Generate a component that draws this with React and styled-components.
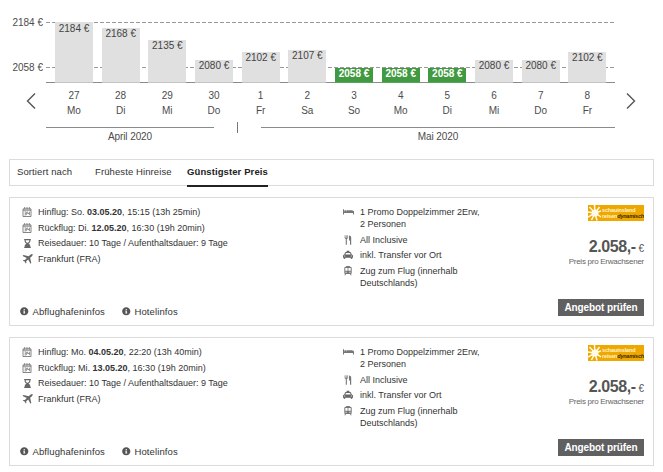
import React from "react";
import styled, { createGlobalStyle, css } from "styled-components";
import { FaHourglassEnd, FaInfoCircle } from "react-icons/fa";

const GlobalStyle = createGlobalStyle`
  * { box-sizing: border-box; }
  body { margin: 0; background: #fff; }
`;

const Page = styled.main`
  width: 663px;
  height: 472px;
  overflow: hidden;
  padding: 22px 9px 0;
  font-family: "Liberation Sans", Arial, sans-serif;
  font-size: 9px;
  color: #333;
`;

/* ---------- price chart ---------- */

const Chart = styled.section`
  display: grid;
  grid-template-columns: 37px 569px 39px;
  height: 137px;
  color: #4c4c4c;
  font-size: 10px;
`;

const Side = styled.div`
  display: flex;
  flex-direction: column;
`;

const AxisLabel = styled.span`
  height: 12px;
  margin: ${(p) => p.$margin};
  line-height: 12px;
  white-space: nowrap;
  text-align: right;
`;

const ArrowButton = styled.button`
  display: block;
  width: 10px;
  height: 18px;
  margin: ${(p) => p.$margin};
  padding: 0;
  border: 0;
  background: none;

  svg { display: block; }
`;

const Plot = styled.div`
  position: relative;
  display: flex;
  align-items: flex-end;
  height: 61px;
  padding-left: 9px;
  background: linear-gradient(#8c8c8c, #8c8c8c) bottom / 100% 1px no-repeat;
`;

const Guide = styled.div`
  position: absolute;
  left: 0;
  right: 0;
  top: ${(p) => p.$top}px;
  height: 1px;
  background: repeating-linear-gradient(90deg, #999 0 4px, transparent 4px 6px);
`;

const BarCell = styled.div`
  position: relative;
  width: 46.75px;
`;

const Bar = styled.div`
  width: 38px;
  height: ${(p) => p.$height}px;
  padding-top: ${(p) => (p.$height > 60 ? 1 : 0)}px;
  border-bottom: 1px solid ${(p) => (p.$best ? "#57a557" : "#c4c4c4")};
  background: ${(p) => (p.$best ? "#419a41" : "#e0e0e0")};
  color: ${(p) => (p.$best ? "#fff" : "#444")};
  font-weight: ${(p) => (p.$best ? 700 : 400)};
  line-height: 12px;
  text-align: center;
  white-space: nowrap;
`;

const Days = styled.div`
  display: flex;
  height: 39px;
  padding: 5px 0 0 9px;
`;

const Day = styled.div`
  width: 46.75px;
  padding-right: 8.75px;
  line-height: 15px;
  text-align: center;
`;

const Months = styled.div`
  display: flex;
`;

const Month = styled.div`
  width: ${(p) => p.$width}px;
  height: 20px;
  margin-top: 5px;
  padding-top: 3px;
  border-top: 1px solid #8a8a8a;
  line-height: 12px;
  text-align: center;
  letter-spacing: -0.1px;
`;

const MonthDivider = styled.div`
  width: 1px;
  height: 11px;
  margin: 0 23px;
  background: #777;
`;

/* ---------- sorting ---------- */

const SortBar = styled.nav`
  display: flex;
  height: 27px;
  padding-left: 7px;
  border: 1px solid #dcdcdc;
  font-size: 9.5px;
`;

const SortItem = styled.span`
  height: 27px;
  width: ${(p) => p.$width}px;
  margin-right: ${(p) => p.$gap}px;
  line-height: 24px;
  white-space: nowrap;
  letter-spacing: 0.1px;
  ${(p) =>
    p.$active &&
    css`
      border-bottom: 2px solid #222;
      font-weight: 700;
      color: #222;
    `}
`;

/* ---------- offers ---------- */

const Card = styled.article`
  display: grid;
  grid-template-columns: 324px 1fr 90px;
  height: 129px;
  margin-top: 11px;
  border: 1px solid #dcdcdc;
  padding: 0 9px 0 9px;
`;

const Column = styled.div`
  display: flex;
  flex-direction: column;
`;

const Flights = styled.ul`
  margin: 0;
  padding: 6.5px 0 0 3px;
  height: 108px;
  list-style: none;
`;

const Services = styled.ul`
  margin: 0;
  padding: 8px 0 0;
  list-style: none;
`;

const FactRow = styled.li`
  display: flex;
  height: 15.6px;
  align-items: center;
  white-space: nowrap;
`;

const ServiceRow = styled.li`
  display: flex;
  min-height: 15.5px;
  margin-bottom: ${(p) => (p.$double ? 3.5 : 0)}px;
  line-height: 12px;
  white-space: pre;
`;

const IconSlot = styled.span`
  display: flex;
  flex: none;
  align-items: center;
  justify-content: center;
  width: 10px;
  height: 12px;
  margin-right: ${(p) => p.$gap}px;
  color: #666;

  svg { display: block; flex: none; }
`;

const InfoLinks = styled.div`
  display: flex;
  align-items: center;
  font-size: 9.5px;
  letter-spacing: 0.1px;
`;

const InfoLink = styled.a`
  display: flex;
  align-items: center;
  width: ${(p) => p.$width}px;
  padding-left: 1px;
  gap: 4px;
  white-space: nowrap;

  svg { color: #555; }
`;

const PriceColumn = styled(Column)`
  align-items: flex-end;
  padding-top: 7px;
`;

const Logo = styled.div`
  display: flex;
  width: 56px;
  height: 16px;
  background: #efa800;
  overflow: hidden;
`;

const LogoText = styled.div`
  padding: 2px 0 0 1px;
  color: #fff4cf;
  font-size: 5.5px;
  font-weight: 700;
  line-height: 6px;
  white-space: nowrap;
  letter-spacing: -0.15px;

  b { color: #3a2900; font-style: italic; letter-spacing: -0.25px; }
`;

const Price = styled.div`
  margin-top: 16px;
  height: 20px;
  line-height: 20px;
  font-size: 10px;
  color: #555;

  strong { font-size: 16px; letter-spacing: -0.4px; }
`;

const PriceNote = styled.div`
  height: 10px;
  line-height: 10px;
  font-size: 8px;
  color: #666;
  white-space: nowrap;
  letter-spacing: -0.27px;
`;

const CheckButton = styled.button`
  width: 86px;
  height: 17px;
  margin-top: 32px;
  padding: 0;
  border: 0;
  background: #606060;
  color: #fff;
  font: 700 10px/17px "Liberation Sans", Arial, sans-serif;
  letter-spacing: -0.1px;
  white-space: nowrap;
`;

/* ---------- icons ---------- */

const Chevron = ({ flip }) => (
  <svg width="10" height="18" viewBox="0 0 10 18" fill="none" stroke="#555" strokeWidth="1.4">
    <path d={flip ? "M1 1.5 8.5 9 1 16.5" : "M9 1.5 1.5 9 9 16.5"} />
  </svg>
);

const CalendarIcon = () => (
  <svg width="10" height="10" viewBox="0 0 10 10" fill="none" stroke="#777">
    <path d="M1 1.9h8v7.6H1zM1 3.2h8" strokeWidth=".9" />
    <path d="M2.7 0v2.4M5 0v2.4M7.3 0v2.4" strokeWidth=".9" />
    <path d="M2.5 4.9h1.8v3H2.5M2.8 6.4h1.5M5.6 4.6v1.9h1.8M7.4 4.6v3.6" strokeWidth=".8" />
  </svg>
);

const BedIcon = () => (
  <svg width="11" height="6" viewBox="0 0 11 6" fill="#777">
    <path d="M0 .3h1v2.3h10V5.4h-1V4.1H1v1.3H0zM1.4 1.2h2v1.4h-2zM3.8 1.2h5q2 .2 2.2 1.4H3.8z" />
  </svg>
);

const CutleryIcon = () => (
  <svg width="8" height="10" viewBox="0 0 8 10" fill="none" stroke="#777">
    <path d="M1 .3v3M2.3.3v3M3.6.3v3" strokeWidth=".7" />
    <path d="M1 3.2h2.6M2.3 3v6.7" strokeWidth="1.1" />
    <path d="M5 .5q2.2 0 2.2 1.8v7.4H6V5.5H5z" fill="#777" stroke="none" />
  </svg>
);

const TaxiIcon = () => (
  <svg width="10" height="10" viewBox="0 0 10 10">
    <path
      fill="#666"
      fillRule="evenodd"
      d="M3.6.8h2.8v1.1h.7q.8.1 1 .9l.6 1.7q1.2.2 1.3 1.3v2h-.7v.8q-.8.9-1.6 0v-.8H2.3v.8q-.8.9-1.6 0v-.8H0v-2Q.1 4.7 1.3 4.5l.6-1.7q.2-.8 1-.9h.7zM2.9 2.9l-.5 1.6h5.2l-.5-1.6zM1.7 5.4a.6.6 0 1 0 .1 1.2.6.6 0 0 0-.1-1.2zm6.5 0a.6.6 0 1 0 .1 1.2.6.6 0 0 0-.1-1.2z"
    />
  </svg>
);

const TrainIcon = () => (
  <svg width="8" height="10" viewBox="0 0 8 10">
    <path
      fill="#777"
      fillRule="evenodd"
      d="M2.2 0h3.6v.7h.8Q7.7.9 7.7 2v4.9q0 .8-.8.9l.7 1.5H6.5L6.1 8H1.9l-.4 1.3H.4L1.1 7.8Q.3 7.7.3 6.9V2Q.3.9 1.4.7h.8zM1.3 2v2.7h2.3V2zm3.1 0v2.7h2.3V2zM1.5 5.8v1h1.1v-1zm3.9 0v1h1.1v-1z"
    />
  </svg>
);

const PlaneIcon = () => (
  <svg width="11" height="10" viewBox="0 0 11 10" fill="#666">
    <path d="M10.6.2q.4 1-.9 2.2L8.1 3.8 9.3 9l-.8.8L6.2 5.6 4.2 7.3l.2 1.5-.7.7-1.1-1.9L.7 6.5l.7-.6 1.5.2L4.8 4.1.6 1.9 1.4 1.1l5.3 1.2L8.4.8Q9.7-.2 10.6.2z" />
  </svg>
);

const SunIcon = () => (
  <svg width="13" height="16" viewBox="0 0 13 16">
    <g stroke="#fffbe8" strokeWidth="1.5">
      <path d="M7 8 1.5 2M7 8 6.5 0M7 8 11.5 2M7 8 13 6M7 8 13 12M7 8 9 15.5M7 8 3.5 15M7 8 0 12M7 8 0 7" />
    </g>
    <circle cx="7" cy="8" r="3.5" fill="#fffbe8" />
  </svg>
);

/* ---------- data ---------- */

const prices = [
  { price: 2184, height: 61, date: 27, day: "Mo" },
  { price: 2168, height: 55, date: 28, day: "Di" },
  { price: 2135, height: 43, date: 29, day: "Mi" },
  { price: 2080, height: 23, date: 30, day: "Do" },
  { price: 2102, height: 31, date: 1, day: "Fr" },
  { price: 2107, height: 33, date: 2, day: "Sa" },
  { price: 2058, height: 15, date: 3, day: "So", best: true },
  { price: 2058, height: 15, date: 4, day: "Mo", best: true },
  { price: 2058, height: 15, date: 5, day: "Di", best: true },
  { price: 2080, height: 23, date: 6, day: "Mi" },
  { price: 2080, height: 23, date: 7, day: "Do" },
  { price: 2102, height: 31, date: 8, day: "Fr" },
];

const offers = [
  {
    out: ["So.", "03.05.20", "15:15 (13h 25min)"],
    back: ["Di.", "12.05.20", "16:30 (19h 20min)"],
  },
  {
    out: ["Mo.", "04.05.20", "22:20 (13h 40min)"],
    back: ["Mi.", "13.05.20", "16:30 (19h 20min)"],
  },
];

const services = [
  { icon: <BedIcon />, text: "1 Promo Doppelzimmer 2Erw,\n2 Personen", double: true },
  { icon: <CutleryIcon />, text: "All Inclusive" },
  { icon: <TaxiIcon />, text: "inkl. Transfer vor Ort" },
  { icon: <TrainIcon />, text: "Zug zum Flug (innerhalb\nDeutschlands)", double: true },
];

const Fact = ({ icon, children }) => (
  <FactRow>
    <IconSlot $gap={6}>{icon}</IconSlot>
    <span>{children}</span>
  </FactRow>
);

const Offer = ({ out, back }) => (
  <Card>
    <Column>
      <Flights>
        <Fact icon={<CalendarIcon />}>
          Hinflug: {out[0]} <b>{out[1]}</b>, {out[2]}
        </Fact>
        <Fact icon={<CalendarIcon />}>
          Rückflug: {back[0]} <b>{back[1]}</b>, {back[2]}
        </Fact>
        <Fact icon={<FaHourglassEnd size={9} />}>Reisedauer: 10 Tage / Aufenthaltsdauer: 9 Tage</Fact>
        <Fact icon={<PlaneIcon />}>Frankfurt (FRA)</Fact>
      </Flights>
      <InfoLinks>
        <InfoLink $width={102}>
          <FaInfoCircle size={8.5} />
          Abflughafeninfos
        </InfoLink>
        <InfoLink $width={70}>
          <FaInfoCircle size={8.5} />
          Hotelinfos
        </InfoLink>
      </InfoLinks>
    </Column>
    <Services>
      {services.map((s) => (
        <ServiceRow key={s.text} $double={s.double}>
          <IconSlot $gap={7}>{s.icon}</IconSlot>
          <span>{s.text}</span>
        </ServiceRow>
      ))}
    </Services>
    <PriceColumn>
      <Logo>
        <SunIcon />
        <LogoText>
          schauinsland
          <br />
          reisen<b>dynamisch</b>
        </LogoText>
      </Logo>
      <Price>
        <strong>2.058,-</strong> €
      </Price>
      <PriceNote>Preis pro Erwachsener</PriceNote>
      <CheckButton>Angebot prüfen</CheckButton>
    </PriceColumn>
  </Card>
);

export default function App() {
  return (
    <>
      <GlobalStyle />
      <Page>
        <Chart>
          <Side>
            <AxisLabel $margin="-5px 3px 0 0">2184 €</AxisLabel>
            <AxisLabel $margin="33px 3px 0 0">2058 €</AxisLabel>
            <ArrowButton $margin="18px 0 0 17px" aria-label="Zurück">
              <Chevron />
            </ArrowButton>
          </Side>
          <div>
            <Plot>
              <Guide $top={0} />
              <Guide $top={45} />
              {prices.map((p) => (
                <BarCell key={p.date}>
                  <Bar $height={p.height} $best={p.best}>
                    {p.price} €
                  </Bar>
                </BarCell>
              ))}
            </Plot>
            <Days>
              {prices.map((p) => (
                <Day key={p.date}>
                  {p.date}
                  <br />
                  {p.day}
                </Day>
              ))}
            </Days>
            <Months>
              <Month $width={168}>April 2020</Month>
              <MonthDivider />
              <Month $width={354}>Mai 2020</Month>
            </Months>
          </div>
          <Side>
            <ArrowButton $margin="70px 0 0 11px" aria-label="Weiter">
              <Chevron flip />
            </ArrowButton>
          </Side>
        </Chart>
        <SortBar>
          <SortItem $width={56} $gap={22}>Sortiert nach</SortItem>
          <SortItem $width={77} $gap={15}>Früheste Hinreise</SortItem>
          <SortItem $width={81} $gap={0} $active>Günstigster Preis</SortItem>
        </SortBar>
        {offers.map((o) => (
          <Offer key={o.out[1]} {...o} />
        ))}
      </Page>
    </>
  );
}
